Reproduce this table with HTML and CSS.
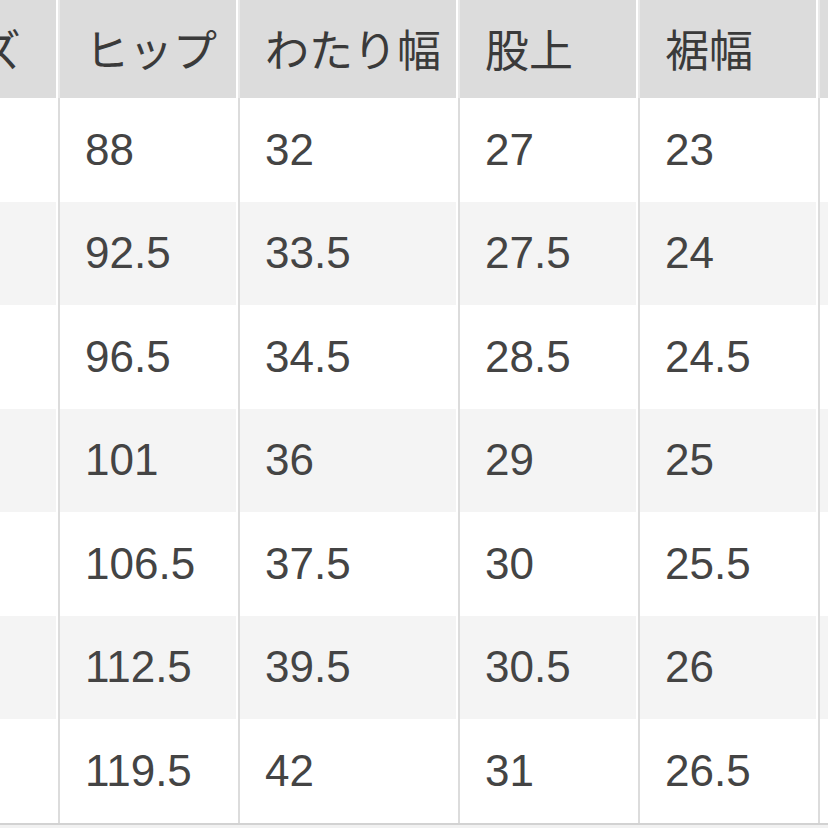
FILE: index.html
```html
<!DOCTYPE html>
<html lang="ja">
<head>
<meta charset="utf-8">
<title>サイズ表</title>
<link rel="stylesheet" href="styles.css">
</head>
<body>
<div class="sheet">
  <div class="size-table">
    <div class="row head">
      <div class="cell first">サイズ</div>
      <div class="cell">ヒップ</div>
      <div class="cell">わたり幅</div>
      <div class="cell">股上</div>
      <div class="cell">裾幅</div>
      <div class="cell"></div>
    </div>
    <div class="row">
      <div class="cell first"></div>
      <div class="cell">88</div>
      <div class="cell">32</div>
      <div class="cell">27</div>
      <div class="cell">23</div>
      <div class="cell"></div>
    </div>
    <div class="row alt">
      <div class="cell first"></div>
      <div class="cell">92.5</div>
      <div class="cell">33.5</div>
      <div class="cell">27.5</div>
      <div class="cell">24</div>
      <div class="cell"></div>
    </div>
    <div class="row">
      <div class="cell first"></div>
      <div class="cell">96.5</div>
      <div class="cell">34.5</div>
      <div class="cell">28.5</div>
      <div class="cell">24.5</div>
      <div class="cell"></div>
    </div>
    <div class="row alt">
      <div class="cell first"></div>
      <div class="cell">101</div>
      <div class="cell">36</div>
      <div class="cell">29</div>
      <div class="cell">25</div>
      <div class="cell"></div>
    </div>
    <div class="row">
      <div class="cell first"></div>
      <div class="cell">106.5</div>
      <div class="cell">37.5</div>
      <div class="cell">30</div>
      <div class="cell">25.5</div>
      <div class="cell"></div>
    </div>
    <div class="row alt">
      <div class="cell first"></div>
      <div class="cell">112.5</div>
      <div class="cell">39.5</div>
      <div class="cell">30.5</div>
      <div class="cell">26</div>
      <div class="cell"></div>
    </div>
    <div class="row">
      <div class="cell first"></div>
      <div class="cell">119.5</div>
      <div class="cell">42</div>
      <div class="cell">31</div>
      <div class="cell">26.5</div>
      <div class="cell"></div>
    </div>
  </div>
</div>
</body>
</html>
```

FILE: styles.css
```css
html, body {
  margin: 0;
  padding: 0;
  background: #f1f1f1;
}

.sheet {
  width: 828px;
  height: 828px;
  overflow: hidden;
  background: #f1f1f1;
}

.size-table {
  width: 1100px;
  margin-left: -134px;
  background: #ffffff;
  border-bottom: 2px solid #d2d2d2;
  font-family: "Liberation Sans", "Noto Sans CJK JP", sans-serif;
  font-size: 44px;
  color: #444444;
}

.row {
  display: grid;
  grid-template-columns: 190px 178px 218px 178px 178px 1fr;
  column-gap: 2px;
  height: 103.5px;
}

.row.head {
  height: 98px;
}

.cell {
  display: flex;
  align-items: center;
  padding-left: 25px;
  border-left: 2px solid #dcdcdc;
  background: #ffffff;
  white-space: nowrap;
  line-height: 1;
}

.cell.first {
  border-left: none;
  padding-left: 24px;
}

.row.alt .cell {
  background: #f4f4f4;
}

.row.head .cell {
  background: #dcdcdc;
  border-left-color: #e9e9e9;
  font-family: "Noto Sans CJK JP", "Liberation Sans", sans-serif;
  color: #3a3a3a;
  padding-left: 25px;
  padding-bottom: 2px;
}

.row.head .cell.first {
  padding-left: 24px;
}
```
